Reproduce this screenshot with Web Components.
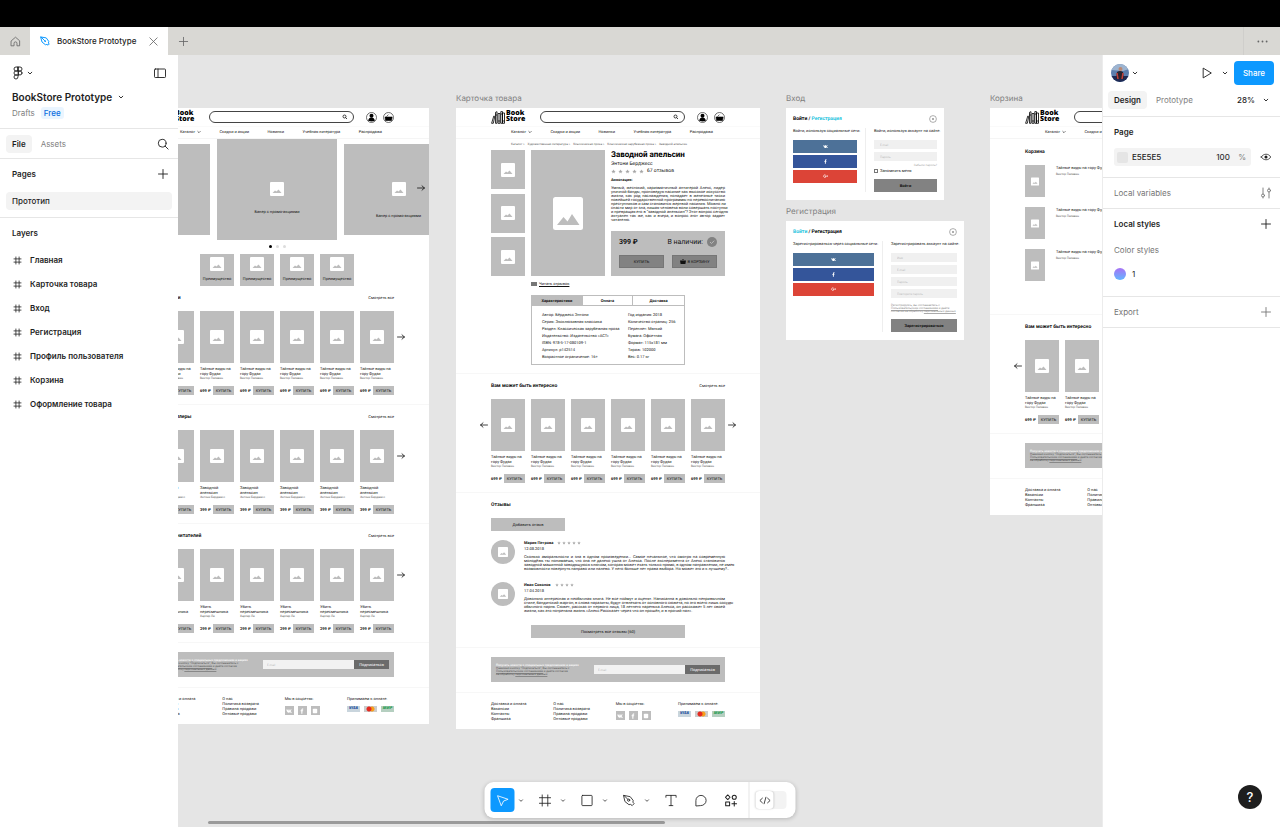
<!DOCTYPE html>
<html lang="ru">
<head>
<meta charset="utf-8">
<meta name="viewport" content="width=device-width, initial-scale=1">
<title>BookStore Prototype</title>
<style>
  html, body { margin: 0; background: #e5e5e5; }
  body { font-family: Inter, "Liberation Sans", sans-serif; color: #1e1e1e; }
</style>
</head>
<body>
<design-app></design-app>
<script>
const RESET = `
  *, *::before, *::after { box-sizing: border-box; }
  :host { display: block; box-sizing: border-box; }
  h1, h2, h3, h4, p, ul, dl, dd, dt { margin: 0; padding: 0; font-weight: inherit; font-size: inherit; }
  ul { list-style: none; }
  button, input, select { font: inherit; color: inherit; border: 0; padding: 0; margin: 0; background: none; border-radius: 0; outline: 0; min-width: 0; text-rendering: inherit; }
  button { display: flex; align-items: center; justify-content: center; white-space: nowrap; cursor: pointer; }
  a { color: inherit; text-decoration: none; }
`;

function define(name, css, html) {
  customElements.define(name, class extends HTMLElement {
    constructor() {
      super();
      this.attachShadow({ mode: 'open' });
    }
    connectedCallback() {
      const body = typeof html === 'function' ? html(this) : html;
      const t = document.createElement('template');
      t.innerHTML = `<style>${RESET}${css}</style>${body}`;
      this.shadowRoot.replaceChildren(t.content.cloneNode(true));
    }
  });
}

/* ---------- icons ---------- */
const S = 'fill="none" stroke="currentColor" stroke-linecap="round" stroke-linejoin="round"';
const ICONS = {
  home: ['0 0 12 12', `<path ${S} d="M1.5 5.2 6 1.3l4.500 3.900V10.700H7.600V8a1.600 1.600 0 0 0-3.200 0v2.700H1.500z"/>`],
  pentab: ['0 0 12 12', `<path ${S} stroke-width="1.200" d="M1.200 1.200 7.500 2.300l3 4.200-.4 1.800.9 1.400-1.300 1.300-1.400-.9-1.800.4-3.700-3zM1.200 1.200l4.300 4.300"/><circle cx="6.200" cy="6.200" r="1" fill="currentColor"/>`],
  close: ['0 0 12 12', `<path ${S} d="M2 2l8 8M10 2l-8 8"/>`],
  plus: ['0 0 12 12', `<path ${S} d="M6 1.500v9M1.500 6h9"/>`],
  dots: ['0 0 12 12', `<g fill="currentColor"><circle cx="1.500" cy="6" r="1"/><circle cx="6" cy="6" r="1"/><circle cx="10.500" cy="6" r="1"/></g>`],
  figma: ['0 0 12 14', `<path ${S} d="M6 1H4a2 2 0 0 0 0 4h2zM6 1h2a2 2 0 0 1 0 4H6zM6 5H4a2 2 0 0 0 0 4h2zM6 9H4a2 2 0 1 0 2 2zM10 7a2 2 0 1 1-4 0 2 2 0 0 1 4 0z"/>`],
  chev: ['0 0 6 6', `<path ${S} d="M1.200 2.200 3 4l1.800-1.800"/>`],
  sidebar: ['0 0 14 12', `<rect x="1.500" y="2" width="11" height="8.500" rx=".8" ${S}/><path ${S} d="M5 2v8.500"/>`],
  search: ['0 0 12 12', `<circle cx="5.200" cy="5.200" r="3.900" ${S}/><path ${S} d="M8.100 8.100l3 3"/>`],
  frame: ['0 0 14 14', `<path ${S} stroke-width="1.200" d="M4.500 1.500v11M9.500 1.500v11M1.500 4.500h11M1.500 9.500h11"/>`],
  play: ['0 0 12 12', `<path ${S} d="M2.500 1.300 10.300 6l-7.800 4.700z"/>`],
  eye: ['0 0 14 14', `<path ${S} d="M1.500 7C4 2.600 10 2.600 12.500 7 10 11.400 4 11.400 1.500 7z"/><circle cx="7" cy="7" r="1.800" fill="currentColor"/>`],
  sliders: ['0 0 12 12', `<g ${S}><path d="M3 1v6M9 11V5"/><circle cx="3" cy="8.500" r="1.500"/><circle cx="9" cy="3.500" r="1.500"/><path d="M3 10v1M9 1v1"/></g>`],
  cursor: ['0 0 14 14', `<path ${S} d="M1.500 2 12.500 5.700 7.600 7.600 5.300 12.300z"/>`],
  hash: ['0 0 14 14', `<path ${S} d="M4 1v12M10 1v12M1 4h12M1 10h12"/>`],
  rect: ['0 0 14 14', `<rect x="1.500" y="1.500" width="11" height="11" rx=".8" ${S}/>`],
  pen: ['0 0 14 14', `<path ${S} d="M1.500 1.500 8.300 2.900l3.200 4-.3 1.900 1.300 1.600-2.100 2.100-1.600-1.300-1.900.3-4-3.200zM1.500 1.500l4.300 4.300"/><circle cx="6.600" cy="6.600" r="1.200" ${S}/>`],
  text: ['0 0 14 14', `<path ${S} d="M1.500 3.500v-2h11v2M7 1.500v11M5 12.500h4"/>`],
  comment: ['0 0 14 14', `<path ${S} d="M1.500 12.500V7a5.500 5.500 0 1 1 5.500 5.500z"/>`],
  widgets: ['0 0 14 14', `<g ${S} stroke-width="1.100"><path d="M3.500 1l2.500 2.500L3.500 6 1 3.500z"/><circle cx="10.500" cy="3.500" r="2.200"/><rect x="1.300" y="8.500" width="4.200" height="4.200"/><path d="M10.500 8v5M8 10.500h5"/></g>`],
  code: ['0 0 14 12', `<path ${S} d="M4.200 3.500 1.500 6l2.700 2.500M9.800 3.500 12.500 6 9.800 8.500M8 2.500 6 9.500"/>`],
  photo: ['0 0 14 14', `<rect width="14" height="14" rx="1" fill="#fff"/><path d="M2.500 11l2.500-2.500 1.500 1L8.500 7.500l3 3.500z" fill="#bdbdbd"/>`],
  photobig: ['0 0 30 33', `<rect width="30" height="33" rx="2.500" fill="#fff"/><path d="M4 28l6.500-8 4 4.500 4.500-7.500L26.500 28z" fill="#bdbdbd"/>`],
  books: ['0 0 14 13', `<g fill="none" stroke="#000" stroke-width=".8"><path d="M.6 12.300 2.800 5l1 .4-1.500 6.900zM4.500 12.300V1.300l1.500-.6v11.600zM7 12.300V2.500h2v9.800zM9.800 12.300V.6h1.700v11.700zM11.500 12.300V2h2v10.300zM4.500 4H6M7 10h2M9.800 3h1.700M11.500 10h2"/></g>`],
  user: ['0 0 11 11', `<circle cx="5.500" cy="5.500" r="5" fill="#fff" stroke="#333" stroke-width=".7"/><circle cx="5.500" cy="3.800" r="2" fill="#000"/><path d="M2.200 8.500c.3-2 1.500-3 3.300-3s3 1 3.300 3c-1 1.200-5.600 1.200-6.600 0z" fill="#000"/>`],
  basket: ['0 0 11 11', `<circle cx="5.500" cy="5.500" r="5" fill="#fff" stroke="#333" stroke-width=".7"/><path d="M2 5h7.200L8.500 8.500h-6zM3.500 4.600l2-2" fill="#000" stroke="#000" stroke-width=".6"/>`],
  cart: ['0 0 6 5', `<path d="M0 1.500h6L5.400 5H.6zM2 1l1-1 1 1z" fill="#111"/>`],
  mag: ['0 0 6 6', `<circle cx="2.500" cy="2.500" r="1.500" fill="none" stroke="#111" stroke-width=".8"/><path d="M3.600 3.600l1.300 1.300" stroke="#111"/>`],
  right: ['0 0 8 6', `<path ${S} stroke-width=".8" d="M.5 3h7M5 .8 7.400 3 5 5.200"/>`],
  left: ['0 0 8 6', `<path ${S} stroke-width=".8" d="M7.500 3h-7M3 .8.6 3 3 5.200"/>`],
  star: ['0 0 6 6', `<path fill="#a6a6a6" d="M3 .5l.7 1.700 1.900.1-1.500 1.200.5 1.900L3 4.300 1.400 5.400l.5-1.900L.4 2.300l1.900-.1z"/>`],
  check: ['0 0 10 10', `<circle cx="5" cy="5" r="5" fill="#828282"/><path fill="none" stroke="#bdbdbd" d="M3 5l1.500 1.500L7.200 3.700"/>`],
  x: ['0 0 8 8', `<circle cx="4" cy="4" r="3.400" fill="none" stroke="#777" stroke-width=".6"/><path d="M3 3l2 2M5 3 3 5" stroke="#777" stroke-width=".6"/>`],
  vk: ['0 0 6 6', `<path fill="#fff" d="M.3 1.500h1.200l.9 1.600V1.500h1.200v1.300l1-1.300h1.200L4.500 3.100 6 4.700H4.600L3.600 3.700v1H2.700C1.400 4.500.7 3.400.3 1.500z"/>`],
  fb: ['0 0 6 6', `<path fill="#fff" d="M2.300 5.700V3.300h-.7v-1h.7c0-1.400.5-2 1.900-1.900v1c-.7 0-.8.2-.8.9h.8l-.2 1h-.6v2.400z"/>`],
  gp: ['0 0 6 6', `<path fill="none" stroke="#fff" stroke-width=".8" d="M3.400 1.700A1.500 1.500 0 1 0 3.600 3H2.400M4.200 2.500h1.600M5 1.700v1.600"/>`],
  ig: ['0 0 6 6', `<rect x=".8" y=".8" width="4.400" height="4.400" rx=".8" fill="#fff"/>`],
};
define('ui-icon', `
  :host { display: inline-block; width: 12px; height: 12px; flex: none; }
  svg { display: block; width: 100%; height: 100%; overflow: visible; stroke-width: .9; }
`, el => {
  const [box, art] = ICONS[el.getAttribute('name')];
  return `<svg viewBox="${box}" aria-hidden="true">${art}</svg>`;
});

/* ---------- editor chrome ---------- */
define('tab-bar', `
  :host { background: #d9d8d4; border-top: 27px solid #000; font-size: 8px; }
  nav { display: flex; height: 28px; align-items: stretch; }
  button { width: 30px; color: #666; }
  .tab { display: flex; align-items: center; width: 138px; padding: 0 9px 0 10px; background: #fff; font-weight: 500; }
  .tab a { flex: 1; display: flex; align-items: center; gap: 7px; white-space: nowrap; }
  .tab a ui-icon { color: #0d99ff; width: 10px; height: 10px; }
  .tab button { width: 12px; }
  .more { margin-left: auto; width: 37px; border-left: 1px solid #cfcecb; }
  ui-icon { width: 11px; height: 11px; }
`, `
  <nav>
    <button aria-label="Home"><ui-icon name="home"></ui-icon></button>
    <div class="tab"><a href="#file"><ui-icon name="pentab"></ui-icon>BookStore Prototype</a><button aria-label="Close tab"><ui-icon name="close"></ui-icon></button></div>
    <button aria-label="New tab"><ui-icon name="plus"></ui-icon></button>
    <button class="more" aria-label="More"><ui-icon name="dots"></ui-icon></button>
  </nav>
`);

define('panel-row', `
  :host { display: flex; align-items: center; justify-content: space-between; height: 30px; font-size: 8px; font-weight: 600; }
`, `<slot></slot><slot name="end"></slot>`);

define('layers-panel', `
  :host { background: #fff; font-size: 8px; }
  section { border-bottom: 1px solid #e6e6e6; padding: 0 9px 0 12px; }
  .row { display: flex; align-items: center; justify-content: space-between; height: 18px; }
  .menu { display: flex; align-items: center; gap: 3px; }
  .file { padding: 9px 11px 9px 12px; }
  .menu ui-icon:first-child { width: 12px; height: 14px; }
  .chev { width: 6px; height: 6px; }
  .wide { width: 14px; }
  h1 { display: flex; align-items: center; gap: 6px; font-size: 10px; line-height: 12px; font-weight: 600; margin-top: 9px; }
  .meta { display: flex; align-items: center; gap: 6px; line-height: 12px; margin-top: 4px; color: #808080; }
  .free { color: #0a6fe0; background: #eaf5ff; border-radius: 3px; padding: 0 3px; font-weight: 500; }
  .tabs { display: flex; align-items: center; height: 30px; padding-left: 6px; }
  .tabs button { height: 18px; padding: 0 6px; border-radius: 4px; color: #808080; }
  .tabs button[aria-selected=true] { background: #f3f3f3; color: #1e1e1e; font-weight: 600; margin-right: 3px; }
  .tabs .find { margin-left: auto; padding: 0; color: #1e1e1e; }
  .pages { padding-bottom: 7px; }
  .page { display: block; margin: 3px -3px 0 -6px; padding: 0 6px; border-radius: 4px; background: #f3f3f3; line-height: 18px; font-weight: 500; }
  .layers { border: 0; }
  li a { display: flex; align-items: center; gap: 8px; height: 24px; padding-left: 1px; font-weight: 600; }
  li ui-icon { width: 9px; height: 9px; }
`, `
  <section class="file">
    <div class="row"><button class="menu" aria-label="Main menu"><ui-icon name="figma"></ui-icon><ui-icon class="chev" name="chev"></ui-icon></button>
      <button aria-label="Minimize UI"><ui-icon class="wide" name="sidebar"></ui-icon></button></div>
    <h1>BookStore Prototype <ui-icon class="chev" name="chev"></ui-icon></h1>
    <div class="meta"><a href="#drafts">Drafts</a><span class="free">Free</span></div>
  </section>
  <section class="tabs" role="tablist"><button role="tab" aria-selected="true">File</button><button role="tab">Assets</button>
    <button class="find" aria-label="Find"><ui-icon name="search"></ui-icon></button></section>
  <section class="pages">
    <panel-row>Pages<button slot="end" aria-label="Add page"><ui-icon name="plus"></ui-icon></button></panel-row>
    <a class="page" href="#page">Прототип</a>
  </section>
  <section class="layers">
    <panel-row>Layers</panel-row>
    <ul>${['Главная', 'Карточка товара', 'Вход', 'Регистрация', 'Профиль пользователя', 'Корзина', 'Оформление товара']
      .map(n => `<li><a href="#layer"><ui-icon name="frame"></ui-icon>${n}</a></li>`).join('')}</ul>
  </section>
`);

define('user-avatar', `
  :host { width: 18px; height: 18px; border-radius: 50%; overflow: hidden; }
  svg { display: block; }
`, `<svg viewBox="0 0 18 18" width="18" height="18"><rect width="18" height="18" fill="#5c7fae"/><path d="M0 0h18v5L12 7 0 6z" fill="#9db4d0"/><path d="M0 12h18v6H0z" fill="#1e2a54"/><path d="M6 8q3-2 6 0l1 7H5z" fill="#2a2430"/><circle cx="9.500" cy="5" r="2" fill="#b98873"/><path d="M6 9l1 6M12 9l-1 6" stroke="#c2403a" stroke-width="1.500"/></svg>`);

define('design-panel', `
  :host { position: relative; background: #fff; border-left: 1px solid #ececec; font-size: 8px; }
  section { border-bottom: 1px solid #e6e6e6; padding: 0 8px 0 11px; }
  .row { display: flex; align-items: center; }
  .top { height: 36px; margin: 0 -2px 0 -3px; gap: 3px; }
  .play { margin-left: auto; margin-right: 6px; }
  .chev { width: 6px; height: 6px; }
  .share { width: 40px; height: 24px; margin-left: 3px; border-radius: 4px; background: #0d99ff; color: #fff; font-weight: 500; }
  .tabs { height: 18px; margin: 0 0 7px -6px; }
  .tabs button { height: 18px; padding: 0 6px; border-radius: 4px; color: #808080; margin-right: 3px; }
  .tabs button[aria-selected=true] { background: #f3f3f3; color: #1e1e1e; font-weight: 600; }
  label { position: relative; display: flex; align-items: center; }
  .zoom { margin-left: auto; gap: 6px; padding-right: 3px; }
  select { appearance: none; width: 20px; height: 18px; font-weight: 500; }
  .fill { gap: 9px; height: 18px; margin: 1px 0 11px; }
  .color { flex: 1; display: flex; align-items: center; height: 18px; border-radius: 3px; background: #f3f3f3; padding: 0 5px 0 3px; }
  .swatch { width: 11px; height: 11px; background: #e5e5e5; border-radius: 2px; margin-right: 4px; }
  .hex { flex: 1; width: 60px; font-weight: 500; }
  .alpha { width: 22px; font-weight: 500; color: #333; }
  .unit { color: #808080; }
  .quiet { font-weight: 400; color: #757575; }
  .quiet ui-icon { color: #777; }
  .styles { padding-bottom: 13px; }
  .style { gap: 6px; height: 18px; margin-top: 4px; }
  .dot { width: 12px; height: 12px; border-radius: 50%; background: linear-gradient(#a872f5, #62b6ff); }
  .color-label { height: 22px; }
  .help { position: absolute; right: 18px; bottom: 18px; width: 24px; height: 24px; border-radius: 50%; background: #1e1e1e; color: #fff; font-size: 13px; font-weight: 500; }
`, `
  <section>
    <div class="row top"><user-avatar></user-avatar><ui-icon class="chev" name="chev"></ui-icon>
      <button class="play" aria-label="Present"><ui-icon name="play"></ui-icon></button><ui-icon class="chev" name="chev"></ui-icon>
      <button class="share">Share</button></div>
    <div class="row tabs"><button aria-selected="true">Design</button><button>Prototype</button>
      <label class="zoom"><select aria-label="Zoom"><option>28%</option></select><ui-icon class="chev" name="chev"></ui-icon></label></div>
  </section>
  <section>
    <panel-row>Page</panel-row>
    <div class="row fill"><div class="color"><span class="swatch"></span><input class="hex" aria-label="Page color" value="E5E5E5"><input class="alpha" aria-label="Opacity" value="100"><span class="unit">%</span></div>
      <ui-icon name="eye"></ui-icon></div>
  </section>
  <section><panel-row class="quiet">Local variables<ui-icon slot="end" name="sliders"></ui-icon></panel-row></section>
  <section class="styles">
    <panel-row>Local styles<ui-icon slot="end" name="plus"></ui-icon></panel-row>
    <panel-row class="quiet color-label">Color styles</panel-row>
    <div class="row style"><span class="dot"></span>1</div>
  </section>
  <section><panel-row class="quiet">Export<ui-icon slot="end" name="plus"></ui-icon></panel-row></section>
  <button class="help" aria-label="Help">?</button>
`);

define('tool-bar', `
  :host { display: flex; align-items: center; gap: 6px; height: 36px; padding: 0 9px 0 6px; border-radius: 9px; background: #fff; box-shadow: 0 1px 4px #0003; }
  .tool { display: flex; align-items: center; }
  button { width: 24px; height: 24px; border-radius: 4px; }
  button[aria-pressed=true] { background: #0d99ff; color: #fff; }
  ui-icon { width: 13px; height: 13px; }
  .tool .more { width: 12px; }
  .more ui-icon { width: 5px; height: 5px; }
  .dev { border-left: 1px solid #e6e6e6; padding-left: 6px; height: 36px; display: flex; align-items: center; }
  .switch { width: 31px; height: 18px; border-radius: 4px; background: #f3f3f3; justify-content: flex-start; }
  .switch span { display: flex; width: 18px; height: 18px; align-items: center; justify-content: center; border-radius: 4px; background: #fff; box-shadow: 0 0 2px #0003; }
`, `
  ${[['cursor', 1], ['hash', 1], ['rect', 1], ['pen', 1], ['text', 0], ['comment', 0], ['widgets', 0]].map(([n, m]) =>
    `<div class="tool"><button aria-label="${n}" ${n === 'cursor' ? 'aria-pressed="true"' : ''}><ui-icon name="${n}"></ui-icon></button>${m ? `<button class="more" aria-label="${n} options"><ui-icon name="chev"></ui-icon></button>` : ''}</div>`).join('')}
  <div class="dev"><button class="switch" aria-label="Dev mode"><span><ui-icon name="code"></ui-icon></span></button></div>
`);

/* ---------- design canvas ---------- */
define('art-board', `
  :host { position: absolute; font-family: Roboto, "Liberation Sans", sans-serif; font-size: 4px; line-height: 4px; color: #111; text-rendering: geometricPrecision; }
  h2 { position: absolute; bottom: 100%; left: 0; font: 8px/20px Inter, sans-serif; color: #808080; white-space: nowrap; }
  .body { background: #fff; overflow: hidden; }
`, el => `${el.hasAttribute('label') ? `<h2>${el.getAttribute('label')}</h2>` : ''}<div class="body"><slot></slot></div>`);

define('shop-header', `
  .top { display: flex; align-items: center; height: 18px; padding: 0 35px; }
  .top > * { flex: none; }
  .logo { display: flex; gap: 1px; width: 49px; font: 800 7px/6px "Open Sans", sans-serif; color: #000; }
  .logo ui-icon { width: 14px; height: 13px; }
  .search { display: flex; align-items: center; width: 145px; height: 12px; border: 1px solid #444; border-radius: 6px; padding: 0 5px; margin-right: 12px; }
  .search input { flex: 1; }
  .search ui-icon { width: 6px; height: 6px; }
  .round { margin-right: 6px; }
  .round ui-icon { width: 11px; height: 11px; }
  nav { display: flex; justify-content: space-between; align-items: center; height: 13px; padding: 0 47px 1px 55px; border-top: 1px solid #fafafa; border-bottom: 1px solid #f5f5f5; white-space: nowrap; }
  nav a { display: flex; align-items: center; gap: 2px; }
  nav ui-icon { width: 4px; height: 4px; }
`, `
  <div class="top"><a class="logo" href="#home"><ui-icon name="books"></ui-icon><span>Book<br>Store</span></a>
    <label class="search"><input type="search" aria-label="Поиск"><ui-icon name="mag"></ui-icon></label>
    <button class="round" aria-label="Профиль"><ui-icon name="user"></ui-icon></button><button class="round" aria-label="Корзина"><ui-icon name="basket"></ui-icon></button></div>
  <nav><a href="#c">Каталог<ui-icon name="chev"></ui-icon></a><a href="#s">Скидки и акции</a><a href="#n">Новинки</a><a href="#u">Учебная литература</a><a href="#r">Распродажа</a></nav>
`);

define('hero-carousel', `
  :host { position: relative; height: 147px; overflow: hidden; }
  .slides { display: flex; justify-content: center; align-items: center; gap: 7px; height: 100px; }
  .slide { flex: none; display: flex; flex-direction: column; align-items: center; width: 109px; height: 91px; padding-top: 38px; gap: 18px; background: #bdbdbd; }
  .slide.main { width: 120px; height: 101px; padding-top: 43px; gap: 14px; }
  ui-icon { width: 14px; height: 14px; }
  .next { position: absolute; right: 4px; top: 46px; }
  .next ui-icon { width: 8px; height: 6px; }
  .dots { display: flex; justify-content: center; gap: 4px; margin: 6px 0; }
  .dots span { width: 3px; height: 3px; border-radius: 50%; background: #ddd; }
  .dots span:first-child { background: #000; }
  .perks { display: grid; grid-template-columns: repeat(4, 34px); justify-content: center; gap: 6px; }
  .perks div { display: flex; flex-direction: column; align-items: center; gap: 6px; height: 32px; padding-top: 3px; background: #bdbdbd; }
`, () => {
  const pic = '<ui-icon name="photo"></ui-icon>', cap = '<span>Банер с промо-акциями</span>';
  return `<div class="slides"><div class="slide">${pic}</div><div class="slide main">${pic}${cap}</div><div class="slide">${pic}${cap}</div></div>
  <button class="next" aria-label="Вперёд"><ui-icon name="right"></ui-icon></button>
  <div class="dots"><span></span><span></span><span></span></div>
  <div class="perks">${`<div>${pic}<span>Преимущество</span></div>`.repeat(4)}</div>`;
});

define('book-card', `
  :host { display: flex; flex-direction: column; height: 84px; }
  .cover { display: flex; align-items: center; justify-content: center; height: 52px; background: #bdbdbd; margin-bottom: 3px; }
  .cover ui-icon { width: 14px; height: 14px; }
  h4 { line-height: 5px; white-space: nowrap; }
  .author { font-size: 3px; color: #555; white-space: nowrap; }
  .buy { display: flex; align-items: center; justify-content: space-between; margin-top: auto; }
  b { font-weight: 700; white-space: nowrap; }
  button { width: 21px; height: 9px; background: #bdbdbd; }
`, el => `<div class="cover"><ui-icon name="photo"></ui-icon></div><h4>${el.getAttribute('title1')}<br>${el.getAttribute('title2')}</h4><p class="author">${el.getAttribute('author')}</p>
  <div class="buy"><b>${el.getAttribute('price')} ₽</b><button>КУПИТЬ</button></div>`);

define('book-shelf', `
  :host { position: relative; padding: 9px 35px; border-bottom: 1px solid #f7f7f7; }
  header { display: flex; align-items: center; justify-content: space-between; height: 6px; margin-bottom: 10px; white-space: nowrap; }
  h3 { font-size: 5px; font-weight: 700; }
  .grid { display: grid; grid-template-columns: repeat(6, 1fr); gap: 6px; }
  .nav { position: absolute; top: 48px; right: 24px; }
  .nav.prev { right: auto; left: 24px; }
  .nav ui-icon { width: 8px; height: 6px; }
`, el => {
  const a = n => el.getAttribute(n);
  return `<header><h3>${a('heading')}</h3><a href="#all">Смотреть все</a></header>
  <div class="grid">${`<book-card title1="${a('title1')}" title2="${a('title2')}" author="${a('author')}" price="${a('price')}"></book-card>`.repeat(6)}</div>
  <button class="nav prev" aria-label="Назад"><ui-icon name="left"></ui-icon></button><button class="nav" aria-label="Вперёд"><ui-icon name="right"></ui-icon></button>`;
});

define('subscribe-box', `
  :host { padding: 9px 35px 10px; border-bottom: 1px solid #f7f7f7; }
  form { display: flex; align-items: center; height: 25px; padding: 0 5px; background: #bdbdbd; }
  .copy { flex: 1; min-width: 0; font-size: 3px; line-height: 3px; white-space: nowrap; color: #555; }
  .copy b { display: block; line-height: 4px; font-weight: 500; color: #fff; }
  a { text-decoration: underline; text-decoration-color: #888; }
  input { width: 91px; height: 9px; background: #f2f2f2; padding: 0 4px; font-size: 3px; }
  input::placeholder { color: #bbb; }
  button { width: 35px; height: 9px; background: #6b6b6b; color: #fff; }
`, `
  <form><p class="copy"><b>Получать новости о специальных предложениях и акциях</b>Нажимая кнопку “Подписаться”, Вы соглашаетесь с<br><a href="#t">Пользовательским соглашением</a> и даёте согласие<br>на обработку <a href="#p">персональных данных</a></p>
  <input type="email" aria-label="E-mail" placeholder="E-mail"><button type="button">Подписаться</button></form>
`);

define('shop-footer', `
  :host { display: grid; grid-template-columns: repeat(4, 1fr); gap: 16px; height: 36px; padding: 8px 35px 0; line-height: 5px; white-space: nowrap; }
  a { display: block; }
  .icons { display: flex; gap: 4px; margin-top: 5px; }
  .social a { display: flex; align-items: center; justify-content: center; width: 9px; height: 9px; background: #bdbdbd; }
  ui-icon { width: 6px; height: 6px; }
  .pay span { width: 13px; height: 6px; background: #c9d5dd; font: italic 800 4px/6px "Open Sans", sans-serif; text-align: center; color: #1c4f9c; }
  .pay .mc { background: radial-gradient(circle at 5px 3px, #e52a20 2px, #0000 3px), radial-gradient(circle at 8px 3px, #f79e1b 2px, #0000 3px), #ccc; }
  .pay .mir { color: #2c9e55; background: #b5cfc0; }
`, `
  <div><a href="#1">Доставка и оплата</a><a href="#2">Вакансии</a><a href="#3">Контакты</a><a href="#4">Франшиза</a></div>
  <div><a href="#5">О нас</a><a href="#6">Политика возврата</a><a href="#7">Правила продажи</a><a href="#8">Оптовые продажи</a></div>
  <div class="social">Мы в соцсетях:<div class="icons"><a href="#vk" aria-label="VK"><ui-icon name="vk"></ui-icon></a><a href="#fb" aria-label="Facebook"><ui-icon name="fb"></ui-icon></a><a href="#ig" aria-label="Instagram"><ui-icon name="ig"></ui-icon></a></div></div>
  <div class="pay">Принимаем к оплате:<div class="icons"><span>VISA</span><span class="mc"></span><span class="mir">МИР</span></div></div>
`);

define('star-row', `
  :host { display: flex; gap: var(--star-gap, 2px); }
  ui-icon { width: var(--star, 5px); height: var(--star, 5px); }
`, el => '<ui-icon name="star"></ui-icon>'.repeat(+el.getAttribute('count')));

define('product-info', `
  :host { padding: 3px 35px 8px; border-bottom: 1px solid #f7f7f7; }
  .crumbs { display: flex; gap: 3px; padding-left: 20px; font-size: 3px; color: #555; height: 4px; margin-bottom: 4px; white-space: nowrap; }
  .main { display: grid; grid-template-columns: 34px 74px minmax(0, 1fr); gap: 6px; height: 126px; }
  .thumbs { display: flex; flex-direction: column; justify-content: space-between; }
  .pic { display: flex; align-items: center; justify-content: center; background: #bdbdbd; }
  .thumbs .pic { height: 39px; }
  .pic ui-icon { width: 14px; height: 14px; }
  .pic .big { width: 30px; height: 33px; }
  .info { display: flex; flex-direction: column; white-space: nowrap; }
  h3 { font-size: 8px; line-height: 10px; font-weight: 700; color: #000; }
  .author { font-size: 5px; line-height: 8px; }
  .rate { display: flex; align-items: center; gap: 3px; font-size: 5px; line-height: 7px; }
  h4 { font-weight: 700; margin: 3px 0 4px; }
  .text { text-align: justify; text-align-last: justify; }
  .text span { text-align-last: left; display: block; }
  .offer { margin-top: auto; height: 45px; padding: 6px 8px 0; background: #bdbdbd; }
  .line { display: flex; justify-content: space-between; align-items: center; font-size: 7px; line-height: 10px; margin-bottom: 8px; }
  .stock { display: flex; align-items: center; gap: 4px; }
  .stock ui-icon { width: 10px; height: 10px; }
  .line button { width: 45px; height: 13px; background: #828282; border: 1px solid #767676; font-size: 4px; gap: 2px; }
  .line button ui-icon { width: 6px; height: 5px; }
  .read { display: flex; align-items: center; gap: 2px; margin: 5px 0 9px 40px; text-decoration: underline; text-decoration-thickness: 1px; height: 5px; }
  .read i { width: 6px; height: 4px; background: #777; }
  .tabs { margin: 0 40px; border: 1px solid #bdbdbd; height: 70px; }
  .heads { display: grid; grid-template-columns: repeat(3, 1fr); height: 10px; border-bottom: 1px solid #bdbdbd; }
  .heads button { font-weight: 700; border-right: 1px solid #bdbdbd; }
  .heads button:first-child { background: #bdbdbd; }
  .heads button:last-child { border: 0; }
  .specs { display: grid; grid-template-columns: 86px 1fr; padding: 5px 10px 0; line-height: 7px; white-space: nowrap; }
`, `
  <nav class="crumbs"><a href="#a">Каталог &gt;</a><a href="#b">Художественная литература &gt;</a><a href="#c">Классическая проза &gt;</a><a href="#d">Классическая зарубежная проза &gt;</a><a href="#e">Заводной апельсин</a></nav>
  <div class="main">
    <div class="thumbs">${'<div class="pic"><ui-icon name="photo"></ui-icon></div>'.repeat(3)}</div>
    <div class="pic"><ui-icon class="big" name="photobig"></ui-icon></div>
    <div class="info"><h3>Заводной апельсин</h3><p class="author">Энтони Берджесс</p>
      <div class="rate"><star-row count="5"></star-row>67 отзывов</div>
      <h4>Аннотация:</h4>
      <p class="text">Умный, жестокий, харизматичный антигерой Алекс, лидер<br>уличной банды, проповедуя насилие как высокое искусство<br>жизни, как род наслаждения, попадает в железные тиски<br>новейшей государственной программы по перевоспитанию<br>преступников и сам становится жертвой насилия. Можно ли<br>спасти мир от зла, лишая человека воли совершать поступки<br>и превращая его в "заводной апельсин"? Этот вопрос сегодня<br>актуален так же, как и вчера, и вопрос этот автор задает<span>читателю.</span></p>
      <div class="offer"><div class="line"><b>399 ₽</b><span class="stock">В наличии: <ui-icon name="check"></ui-icon></span></div>
        <div class="line"><button>КУПИТЬ</button><button><ui-icon name="cart"></ui-icon>В КОРЗИНУ</button></div></div>
    </div>
  </div>
  <a class="read" href="#read"><i></i>Читать отрывок</a>
  <div class="tabs"><div class="heads"><button>Характеристики</button><button>Оплата</button><button>Доставка</button></div>
    <div class="specs">
      <span>Автор: Бёрджесс Энтони</span><span>Год издания: 2018</span>
      <span>Серия: Эксклюзивная классика</span><span>Количество страниц: 256</span>
      <span>Раздел: Классическая зарубежная проза</span><span>Переплет: Мягкий</span>
      <span>Издательство: Издательство «АСТ»</span><span>Бумага: Офсетная</span>
      <span>ISBN: 978-5-17-080109-1</span><span>Формат: 115x181 мм</span>
      <span>Артикул: p142514</span><span>Тираж: 102000</span>
      <span>Возрастное ограничение: 16+</span><span>Вес: 0.17 кг</span>
    </div></div>
`);

define('review-item', `
  :host { display: flex; gap: 9px; height: 42px; --star: 4px; --star-gap: 1px; }
  .face { display: flex; align-items: center; justify-content: center; flex: none; width: 24px; height: 24px; border-radius: 50%; background: #bdbdbd; }
  .face ui-icon { width: 10px; height: 10px; }
  .body { flex: 1; min-width: 0; white-space: nowrap; }
  .name { display: flex; align-items: center; gap: 4px; height: 6px; }
  .date { line-height: 6px; margin-bottom: 3px; }
  .text { text-align: justify; text-align-last: justify; }
  ::slotted(span) { display: block; text-align-last: left; }
`, el => `<div class="face"><ui-icon name="photo"></ui-icon></div><div class="body"><div class="name"><b>${el.getAttribute('name')}</b><star-row count="${el.getAttribute('stars')}"></star-row></div><p class="date">${el.getAttribute('date')}</p><div class="text"><slot></slot></div></div>`);

define('product-reviews', `
  :host { padding: 9px 35px; border-bottom: 1px solid #f7f7f7; }
  h3 { font-size: 5px; line-height: 6px; font-weight: 700; margin-bottom: 10px; }
  button { height: 13px; background: #bdbdbd; }
  .add { width: 74px; margin-bottom: 9px; }
  .all { width: 154px; margin: 1px auto 0; }
`, `
  <h3>Отзывы</h3><button class="add">Добавить отзыв</button>
  <review-item name="Мария Петрова" stars="5" date="12.08.2018">Сколько аморальности и зла в одном произведении... Самое печальное, что смотря на современную<br>молодёжь ты понимаешь, что она не далеко ушла от Алекса. После эксперимента ст Алекс становится<br>заводной машинной заводящуюся ключом, которая может ехать только прямо, в одном направлении, не имея<span>возможности повернуть направо или налево. У него больше нет права выбора. Но может это и к лучшему?..</span></review-item>
  <review-item name="Иван Соколов" stars="4" date="17.04.2018">Довольно интересная и необычная книга. Не все поймут и оценят. Написанна в довольно непривычном<br>стиле, бандитский жаргон, в слова паразиты, будут отвлекать от основного сюжета, но это всего лишь сосуды<br>обычного парня. Сюжет, рассказ от первого лица, 18 летнего паренька Алекса, он расскажет 5 лет своей<span>жизни, как это потрепала жизнь «Алекс Рассказет через что он прошёл, и в прочий нал».</span></review-item>
  <button class="all">Посмотреть все отзывы (60)</button>
`);

define('cart-list', `
  :host { height: 176px; padding: 10px 35px 0; border-bottom: 1px solid #f7f7f7; }
  h3 { font-size: 5px; line-height: 6px; font-weight: 700; margin-bottom: 10px; }
  li { display: flex; gap: 11px; height: 42px; white-space: nowrap; }
  .pic { display: flex; align-items: center; justify-content: center; width: 20px; height: 32px; background: #bdbdbd; }
  .pic ui-icon { width: 8px; height: 9px; }
  p { line-height: 6px; }
  .by { font-size: 3px; color: #555; }
`, `<h3>Корзина</h3><ul>${'<li><div class="pic"><ui-icon name="photo"></ui-icon></div><div><p>Тайные виды на гору Фудзи</p><p class="by">Виктор Пелевин</p></div></li>'.repeat(3)}</ul>`);

define('auth-dialog', `
  :host { padding: 7px 7px 8px; white-space: nowrap; }
  header { display: flex; justify-content: space-between; align-items: center; height: 8px; font-size: 5px; font-weight: 700; color: #000; margin-bottom: 5px; }
  header a { color: #21c3dd; }
  header ui-icon { width: 8px; height: 8px; }
  .cols { display: grid; grid-template-columns: var(--cols); column-gap: 8px; }
  .cols > * { min-width: 0; }
  h3 { line-height: 6px; margin-bottom: 6px; }
  .social { border-right: 1px solid #eee; padding-right: 8px; }
  .social button { width: 100%; height: 13px; margin-bottom: 2px; background: #4d7198; }
  .social .fb { background: #34559a; }
  .social .gp { background: #dc4437; }
  .social ui-icon { width: 5px; height: 5px; }
  input[type=text], input[type=password] { display: block; width: 100%; height: 9px; background: #f0f0f0; padding: 0 6px; margin-bottom: 3px; font-size: 3px; }
  input::placeholder { color: #bbb; }
  .forgot { display: block; text-align: right; font-size: 3px; line-height: 3px; color: #aaa; }
  label { display: flex; align-items: center; gap: 2px; height: 6px; margin: 1px 0 5px; }
  input[type=checkbox] { appearance: none; width: 4px; height: 4px; border: 1px solid #777; }
  .terms { font-size: 3px; line-height: 3px; color: #888; margin: 6px 0; }
  .terms a { text-decoration: underline; text-decoration-color: #aaa; }
  .go { width: 100%; height: 13px; background: #828282; font-weight: 700; }
`, el => {
  const reg = el.hasAttribute('register');
  const f = (n, t = 'text') => `<input type="${t}" aria-label="${n}" placeholder="${n}">`;
  return `<header><span>${reg ? '<a href="#in">Войти</a> / Регистрация' : 'Войти / <a href="#up">Регистрация</a>'}</span><button aria-label="Закрыть"><ui-icon name="x"></ui-icon></button></header>
  <div class="cols"><div class="social"><h3>${reg ? 'Зарегистрироваться через социальные сети:' : 'Войти, используя социальные сети:'}</h3><button aria-label="VK"><ui-icon name="vk"></ui-icon></button><button class="fb" aria-label="Facebook"><ui-icon name="fb"></ui-icon></button><button class="gp" aria-label="Google+"><ui-icon name="gp"></ui-icon></button></div>
  <form>${reg
    ? `<h3>Зарегистрировать аккаунт на сайте:</h3>${f('Имя')}${f('E-mail')}${f('Пароль', 'password')}${f('Повторите пароль', 'password')}<p class="terms">Регистрируясь, вы соглашаетесь с<br><a href="#t">Пользовательским соглашением</a> и даёте<br>согласие на обработку <a href="#p">персональных данных</a></p><button type="button" class="go">Зарегистрироваться</button>`
    : `<h3>Войти, используя аккаунт на сайте:</h3>${f('E-mail')}${f('Пароль', 'password')}<a class="forgot" href="#forgot">Забыли пароль?</a><label><input type="checkbox">Запомнить меня</label><button type="button" class="go">Войти</button>`}</form></div>`;
});

define('design-canvas', `
  :host { position: relative; background: #e5e5e5; overflow: hidden; }
  .page { width: 304px; top: 53px; }
  .home { left: -53px; }
  .product { left: 278px; }
  .basket { left: 812px; }
  .login { left: 608px; top: 53px; width: 158px; --cols: 73px 1fr; }
  .signup { left: 608px; top: 166px; width: 178px; --cols: 90px 1fr; }
  tool-bar { position: absolute; left: 50%; bottom: 9px; transform: translateX(-50%); }
  .scroll { position: absolute; left: 30px; bottom: 3px; width: 457px; height: 3px; border-radius: 2px; background: #9a9a9a; }
`, () => {
  const fuji = 'title1="Тайные виды на" title2="гору Фудзи" author="Виктор Пелевин" price="699"';
  return `
  <art-board class="page home"><shop-header></shop-header><hero-carousel></hero-carousel>
    <book-shelf heading="Новинки" ${fuji}></book-shelf>
    <book-shelf heading="Бестселлеры" title1="Заводной" title2="апельсин" author="Энтони Берджесс" price="399"></book-shelf>
    <book-shelf heading="Выбор читателей" title1="Убить" title2="пересмешника" author="Харпер Ли" price="299"></book-shelf>
    <subscribe-box></subscribe-box><shop-footer></shop-footer></art-board>
  <art-board class="page product" label="Карточка товара"><shop-header></shop-header><product-info></product-info>
    <book-shelf heading="Вам может быть интересно" ${fuji}></book-shelf><product-reviews></product-reviews>
    <subscribe-box></subscribe-box><shop-footer></shop-footer></art-board>
  <art-board class="login" label="Вход"><auth-dialog></auth-dialog></art-board>
  <art-board class="signup" label="Регистрация"><auth-dialog register></auth-dialog></art-board>
  <art-board class="page basket" label="Корзина"><shop-header></shop-header><cart-list></cart-list>
    <book-shelf heading="Вам может быть интересно" ${fuji}></book-shelf><subscribe-box></subscribe-box><shop-footer></shop-footer></art-board>
  <div class="scroll"></div>
  <tool-bar></tool-bar>`;
});

define('design-app', `
  :host { display: flex; flex-direction: column; min-height: 100vh; }
  main { flex: 1; display: grid; grid-template-columns: 178px 1fr 178px; }
`, `<tab-bar></tab-bar><main><layers-panel></layers-panel><design-canvas></design-canvas><design-panel></design-panel></main>`);
</script>
</body>
</html>
